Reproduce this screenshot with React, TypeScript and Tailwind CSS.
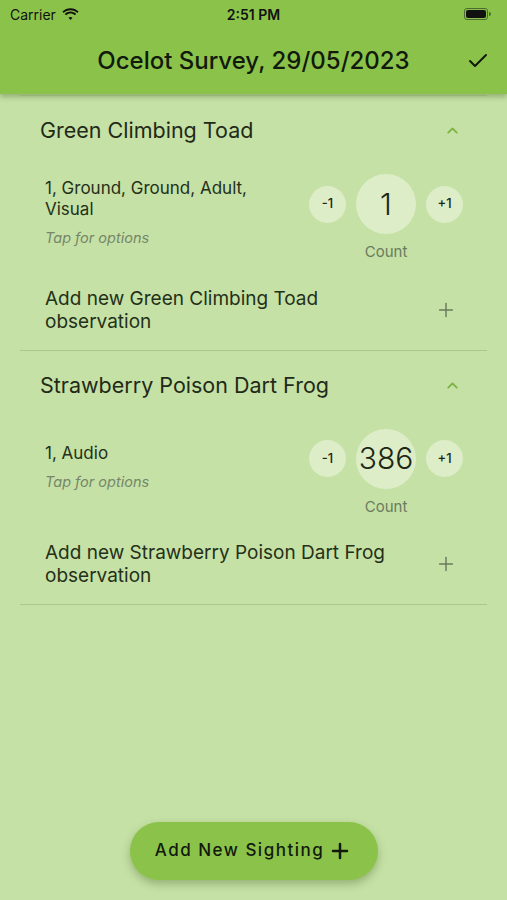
import { Check, ChevronUp, Plus } from "lucide-react";

const sightings = [
  {
    species: "Green Climbing Toad",
    lines: ["1, Ground, Ground, Adult,", "Visual"],
    count: 1,
  },
  {
    species: "Strawberry Poison Dart Frog",
    lines: ["1, Audio"],
    count: 386,
  },
];

const StatusBar = () => (
  <div className="flex h-[28px] items-center justify-between px-[10px] text-[14px] text-[#111]">
    <div className="flex w-[120px] items-center gap-[6px]">
      <span>Carrier</span>
      <svg width="17" height="13" viewBox="0 0 17 13">
        <path d="M8.5 2.2c2.6 0 5 1 6.8 2.7l1.3-1.4C14.4 1.4 11.6.2 8.5.2S2.6 1.4.4 3.5l1.3 1.4C3.5 3.2 5.9 2.2 8.5 2.2z" fill="#111" />
        <path d="M8.5 5.6c1.7 0 3.2.6 4.4 1.7l1.3-1.4c-1.5-1.4-3.5-2.3-5.7-2.3s-4.2.9-5.7 2.3l1.3 1.4c1.2-1.1 2.7-1.7 4.4-1.7z" fill="#111" />
        <path d="M8.5 9c.8 0 1.5.3 2 .8L8.5 12l-2-2.2c.5-.5 1.2-.8 2-.8z" fill="#111" />
      </svg>
    </div>
    <span className="font-semibold">2:51 PM</span>
    <div className="flex w-[120px] justify-end pr-[6px]">
      <div className="flex items-center">
        <div className="h-[12px] w-[24px] rounded-[3px] border border-[#4a6a30] p-[1px]">
          <div className="h-full w-full rounded-[2px] bg-[#111]" />
        </div>
        <div className="ml-[1px] h-[4px] w-[2px] rounded-r-sm bg-[#4a6a30]" />
      </div>
    </div>
  </div>
);

const Counter = ({ count }: { count: number }) => (
  <div className="flex flex-col items-center">
    <div className="flex items-center gap-[10px]">
      <button className="flex h-[37px] w-[37px] items-center justify-center rounded-full bg-[#dcedc8] text-[13px] font-medium text-[#1c2615]">
        -1
      </button>
      <div className="flex h-[60px] w-[60px] items-center justify-center rounded-full bg-[#dcedc8] text-[30px] font-light text-[#1c2615]">
        {count}
      </div>
      <button className="flex h-[37px] w-[37px] items-center justify-center rounded-full bg-[#dcedc8] text-[13px] font-medium text-[#1c2615]">
        +1
      </button>
    </div>
    <span className="mt-[7px] text-[15px] text-[#6b7b5f]">Count</span>
  </div>
);

export default function App() {
  return (
    <div
      className="relative flex h-[900px] w-[507px] flex-col overflow-hidden bg-[#c5e1a5] text-[#1f2a18]"
      style={{ fontFamily: "Inter, 'Noto Sans', sans-serif" }}
    >
      <div className="z-10 bg-[#8bc34a] shadow-[0_3px_5px_rgba(60,90,30,0.35)]">
        <StatusBar />
        <div className="relative flex h-[66px] items-center justify-center">
          <h1 className="text-[24px] font-medium text-[#111a0c]">Ocelot Survey, 29/05/2023</h1>
          <Check className="absolute right-[17px] h-[24px] w-[24px] text-[#111a0c]" strokeWidth={2} />
        </div>
      </div>

      <div className="mx-[20px] mt-px border-t border-[#b3d392]">
        {sightings.map((s) => (
          <div key={s.species} className="border-b border-[#a8c98a]">
            <div className="flex h-[69px] items-center justify-between pl-[20px] pr-[26px]">
              <span className="text-[21.5px] text-[#1f2a18]">{s.species}</span>
              <ChevronUp className="h-[17px] w-[17px] text-[#7cb342]" strokeWidth={2.5} />
            </div>
            <div className="flex items-center justify-between pl-[25px] pr-[24px] pt-[9px]">
              <div className="pb-[10px]">
                {s.lines.map((l) => (
                  <div key={l} className="text-[17px] leading-[21px] text-[#243019]">
                    {l}
                  </div>
                ))}
                <div className="mt-[7px] text-[14.5px] italic text-[#76866a]">Tap for options</div>
              </div>
              <Counter count={s.count} />
            </div>
            <div className="flex items-center justify-between pb-[17px] pl-[25px] pr-[30px] pt-[23px]">
              <span className="w-[362px] text-[19px] leading-[23px] text-[#243019]">
                Add new {s.species} observation
              </span>
              <Plus className="h-[22px] w-[22px] text-[#6b7b5f]" strokeWidth={1.6} />
            </div>
          </div>
        ))}
      </div>

      <div className="mt-auto mb-[20px] flex justify-center">
        <button className="flex h-[58px] w-[248px] items-center justify-center gap-[4px] rounded-full bg-[#8bc34a] text-[17px] font-medium tracking-[1.5px] text-[#111a0c] shadow-[0_4px_8px_rgba(60,90,30,0.35)]">
          Add New Sighting
          <Plus className="h-[24px] w-[24px]" strokeWidth={2.5} />
        </button>
      </div>
    </div>
  );
}
